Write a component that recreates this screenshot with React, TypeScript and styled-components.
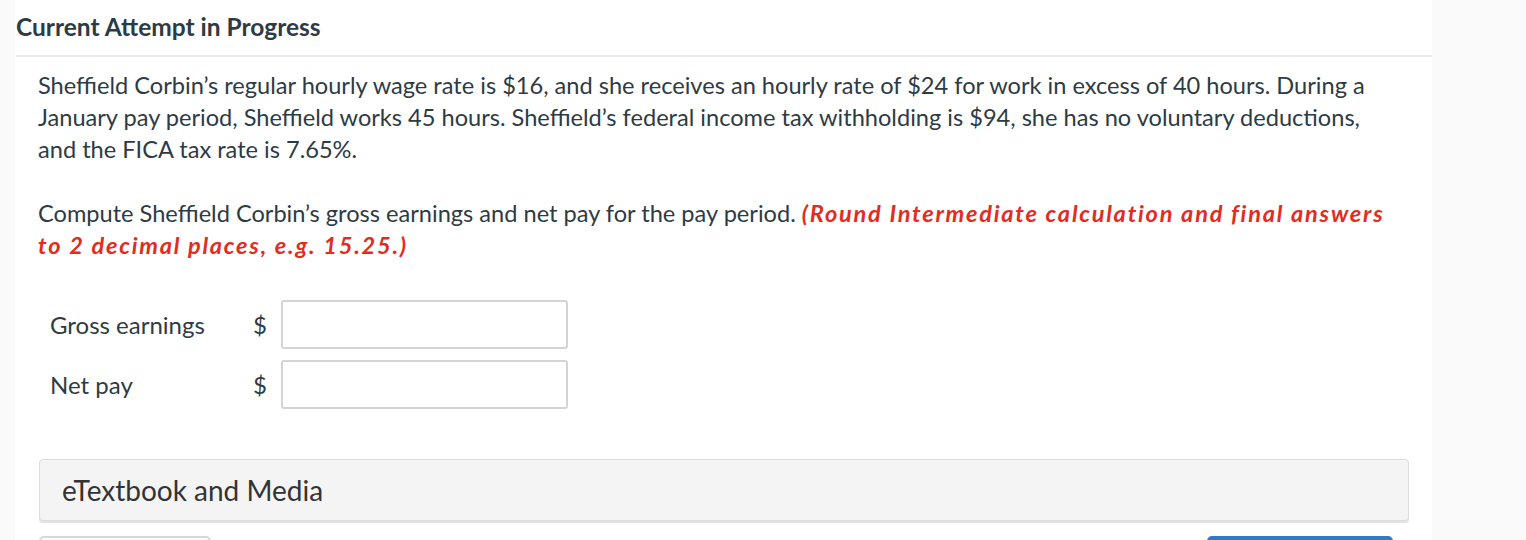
import React from "react";
import styled, { createGlobalStyle } from "styled-components";

const GlobalStyle = createGlobalStyle`
  html, body {
    margin: 0;
    padding: 0;
    background: #fafafa;
    font-family: Lato, "Open Sans", Arial, sans-serif;
    color: #2d3b45;
  }
`;

const Main = styled.main`
  margin-left: 15px;
  width: 1417px;
  height: 540px;
  background: #fff;
  overflow: hidden;
`;

const Header = styled.h2`
  margin: 0 0 0 1px;
  padding: 12px 0 13px;
  font-size: 24.5px;
  font-weight: 700;
  line-height: 30px;
  color: #2d3b45;
  border-bottom: 2px solid #ececec;
`;

const Body = styled.section`
  padding: 12px 30px 0 23px;
`;

const Paragraph = styled.p<{ $last?: boolean }>`
  margin: 0 0 ${(p) => (p.$last ? "0" : "32px")};
  font-size: 23.6px;
  line-height: 32px;
  color: #2d3b45;
`;

const Hint = styled.span`
  color: #e42b1f;
  font-weight: 700;
  font-style: italic;
  letter-spacing: 1.75px;
`;

const Fields = styled.div`
  display: grid;
  grid-template-columns: 203px 28px 287px;
  row-gap: 11px;
  align-items: center;
  margin: 39px 0 0 12px;
`;

const Label = styled.label`
  font-size: 24px;
  color: #2d3b45;
`;

const Currency = styled.span`
  font-size: 24px;
  color: #2d3b45;
`;

const Input = styled.input`
  box-sizing: border-box;
  width: 287px;
  height: 49px;
  border: 2px solid #d4d4d4;
  border-radius: 3px;
  background: #fff;
  font: inherit;
  font-size: 20px;
  padding: 0 10px;
`;

const MediaBar = styled.div`
  box-sizing: border-box;
  margin: 50px 0 0 1px;
  width: 1370px;
  height: 62px;
  display: flex;
  align-items: center;
  padding-left: 22px;
  background: #f4f4f4;
  border: 1px solid #dcdcdc;
  border-radius: 4px;
  box-shadow: 0 2px 0 #e2e2e2;
  font-size: 28px;
  color: #333;
`;

const Actions = styled.div`
  display: flex;
  justify-content: space-between;
  margin: 15px 9px 0 1px;
`;

const Button = styled.button<{ $primary?: boolean }>`
  width: ${(p) => (p.$primary ? "186px" : "172px")};
  height: 40px;
  border-radius: 5px;
  border: 2px solid ${(p) => (p.$primary ? "#2f7bc6" : "#d8d8d8")};
  background: ${(p) => (p.$primary ? "#2f7bc6" : "#fff")};
  color: ${(p) => (p.$primary ? "#fff" : "#2d3b45")};
  font: inherit;
  font-size: 18px;
`;

export default function App() {
  return (
    <>
      <GlobalStyle />
      <Main>
        <Header>Current Attempt in Progress</Header>
        <Body>
          <Paragraph>
            Sheffield Corbin’s regular hourly wage rate is $16, and she receives an hourly rate of $24 for work in
            excess of 40 hours. During a January pay period, Sheffield works 45 hours. Sheffield’s federal income tax
            withholding is $94, she has no voluntary deductions, and the FICA tax rate is 7.65%.
          </Paragraph>
          <Paragraph $last>
            Compute Sheffield Corbin’s gross earnings and net pay for the pay period.{" "}
            <Hint>(Round Intermediate calculation and final answers to 2 decimal places, e.g. 15.25.)</Hint>
          </Paragraph>
          <Fields>
            <Label htmlFor="gross">Gross earnings</Label>
            <Currency>$</Currency>
            <Input id="gross" type="text" />
            <Label htmlFor="net">Net pay</Label>
            <Currency>$</Currency>
            <Input id="net" type="text" />
          </Fields>
          <MediaBar>eTextbook and Media</MediaBar>
          <Actions>
            <Button>Save for Later</Button>
            <Button $primary>Submit Answer</Button>
          </Actions>
        </Body>
      </Main>
    </>
  );
}
